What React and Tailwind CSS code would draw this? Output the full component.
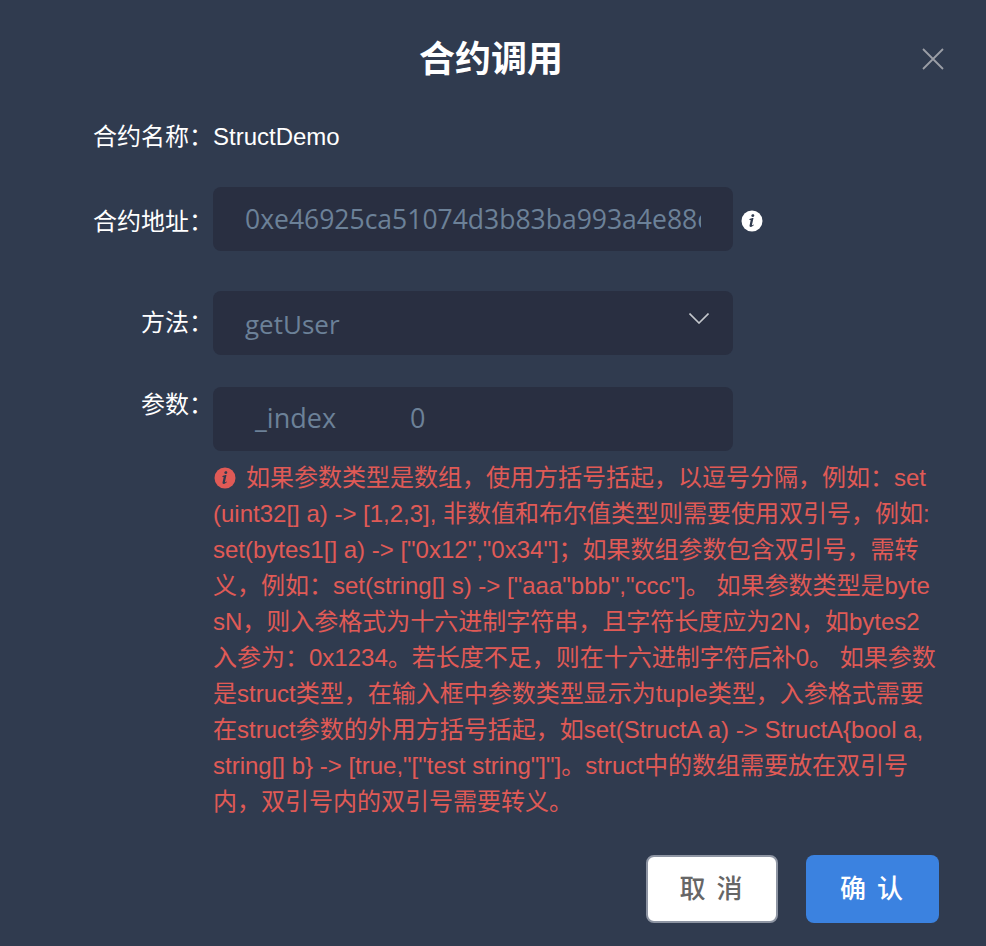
import React from 'react';

const InfoIcon = ({ className }) => (
    <svg viewBox="0 0 22 22" className={className}>
        <circle cx="11" cy="11" r="10.5" fill="currentColor" />
        <path
            d="M11.9 4.2c.9 0 1.4.5 1.4 1.2 0 .9-.7 1.5-1.6 1.5-.9 0-1.4-.5-1.4-1.2 0-.8.6-1.5 1.6-1.5zM8.3 9.3c.8-.6 2.4-1.2 4.2-1.2l-1.5 6.6c-.1.5.1.6.3.6.3 0 .7-.3 1.1-.7l.5.5c-.9 1.1-2 1.8-3.1 1.8-1.1 0-1.4-.7-1.2-1.7l1-4.6c.1-.5-.1-.6-.4-.6l-.7.1z"
            fill="#303b4f"
        />
    </svg>
);

const Row = ({ label, className, labelClass = '', children }) => (
    <div className={`flex ${className}`}>
        <label className={`w-[213px] shrink-0 text-right text-[24px] leading-[36px] text-white ${labelClass}`}>{label}</label>
        {children}
    </div>
);

export default function App() {
    return (
        <div
            className="flex h-[946px] w-[986px] flex-col overflow-hidden bg-[#303b4f] text-white"
            style={{ fontFamily: '"Liberation Sans", "Noto Sans CJK SC", sans-serif' }}
        >
            <div className="relative flex h-[119px] shrink-0 items-start justify-center pt-[36px] pr-[4px]">
                <h2 className="text-[36px] leading-[48px] font-bold">合约调用</h2>
                <svg viewBox="0 0 22 22" className="absolute top-[48px] left-[922px] h-[22px] w-[22px] text-[#9b9ea6]">
                    <path d="M1 1l20 20M21 1L1 21" stroke="currentColor" strokeWidth="1.8" fill="none" />
                </svg>
            </div>

            <Row label="合约名称：" className="h-[36px]">
                <span className="text-[24px] leading-[36px]">StructDemo</span>
            </Row>

            <Row label="合约地址：" className="mt-[32px] items-center" labelClass="pt-[6px]">
                <div className="flex h-[64px] w-[520px] items-center overflow-hidden rounded-lg bg-[#292f41] px-[32px]">
                    <span className="overflow-hidden pt-[2px] text-[26.5px] whitespace-nowrap text-[#6c8198]" style={{ fontFamily: '"Open Sans", sans-serif' }}>
                        0xe46925ca51074d3b83ba993a4e88c3f2a1d7
                    </span>
                </div>
                <InfoIcon className="mt-[4px] ml-[8px] h-[22px] w-[22px] text-white" />
            </Row>

            <Row label="方法：" className="mt-[40px] items-center">
                <div className="flex h-[64px] w-[520px] items-center justify-between rounded-lg bg-[#292f41] pr-[24px] pl-[32px]">
                    <span className="pt-[2px] text-[26px] text-[#6c8198]" style={{ fontFamily: '"Open Sans", sans-serif' }}>getUser</span>
                    <svg viewBox="0 0 20 11" className="mb-[10px] h-[11px] w-[20px] text-[#c4c7cc]">
                        <path d="M.5.5L10 10 19.5.5" stroke="currentColor" strokeWidth="1.6" fill="none" />
                    </svg>
                </div>
            </Row>

            <Row label="参数：" className="mt-[32px]">
                <div className="w-[520px] shrink-0">
                    <div className="flex h-[64px] items-center rounded-lg bg-[#292f41] pb-[2px] pl-[42px] text-[27px] text-[#6c8198]" style={{ fontFamily: '"Open Sans", sans-serif' }}>
                        <span className="w-[155px]">_index</span>
                        <span>0</span>
                    </div>
                </div>
            </Row>

            <div className="mt-[9px] ml-[213px] w-[724px] text-[24px] leading-[36px] break-all text-[#e05a56]">
                <InfoIcon className="mr-[10px] mb-[3px] ml-[1px] inline-block h-[22px] w-[22px]" />
                如果参数类型是数组，使用方括号括起，以逗号分隔，例如：set(uint32[] a) -&gt; [1,2,3], 非数值和布尔值类型则需要使用双引号，例如:set(bytes1[] a) -&gt; ["0x12","0x34"]；如果数组参数包含双引号，需转义，例如：set(string[] s) -&gt; ["aaa"bbb","ccc"]。 如果参数类型是bytesN，则入参格式为十六进制字符串，且字符长度应为2N，如bytes2入参为：0x1234。若长度不足，则在十六进制字符后补0。 如果参数是struct类型，在输入框中参数类型显示为tuple类型，入参格式需要在struct参数的外用方括号括起，如set(StructA a) -&gt; StructA{'{'}bool a, string[] b{'}'} -&gt; [true,"["test string"]"]。struct中的数组需要放在双引号内，双引号内的双引号需要转义。
            </div>

            <div className="mt-[35px] ml-[646px] flex gap-[28px]">
                <button className="h-[68px] w-[132px] rounded-lg border-2 border-[#8e95a3] bg-white pl-[9px] text-[26px] font-medium tracking-[11px] text-[#666666]">取消</button>
                <button className="h-[68px] w-[133px] rounded-lg bg-[#3b82e0] pl-[9px] text-[26px] font-medium tracking-[11px] text-white">确认</button>
            </div>
        </div>
    );
}
